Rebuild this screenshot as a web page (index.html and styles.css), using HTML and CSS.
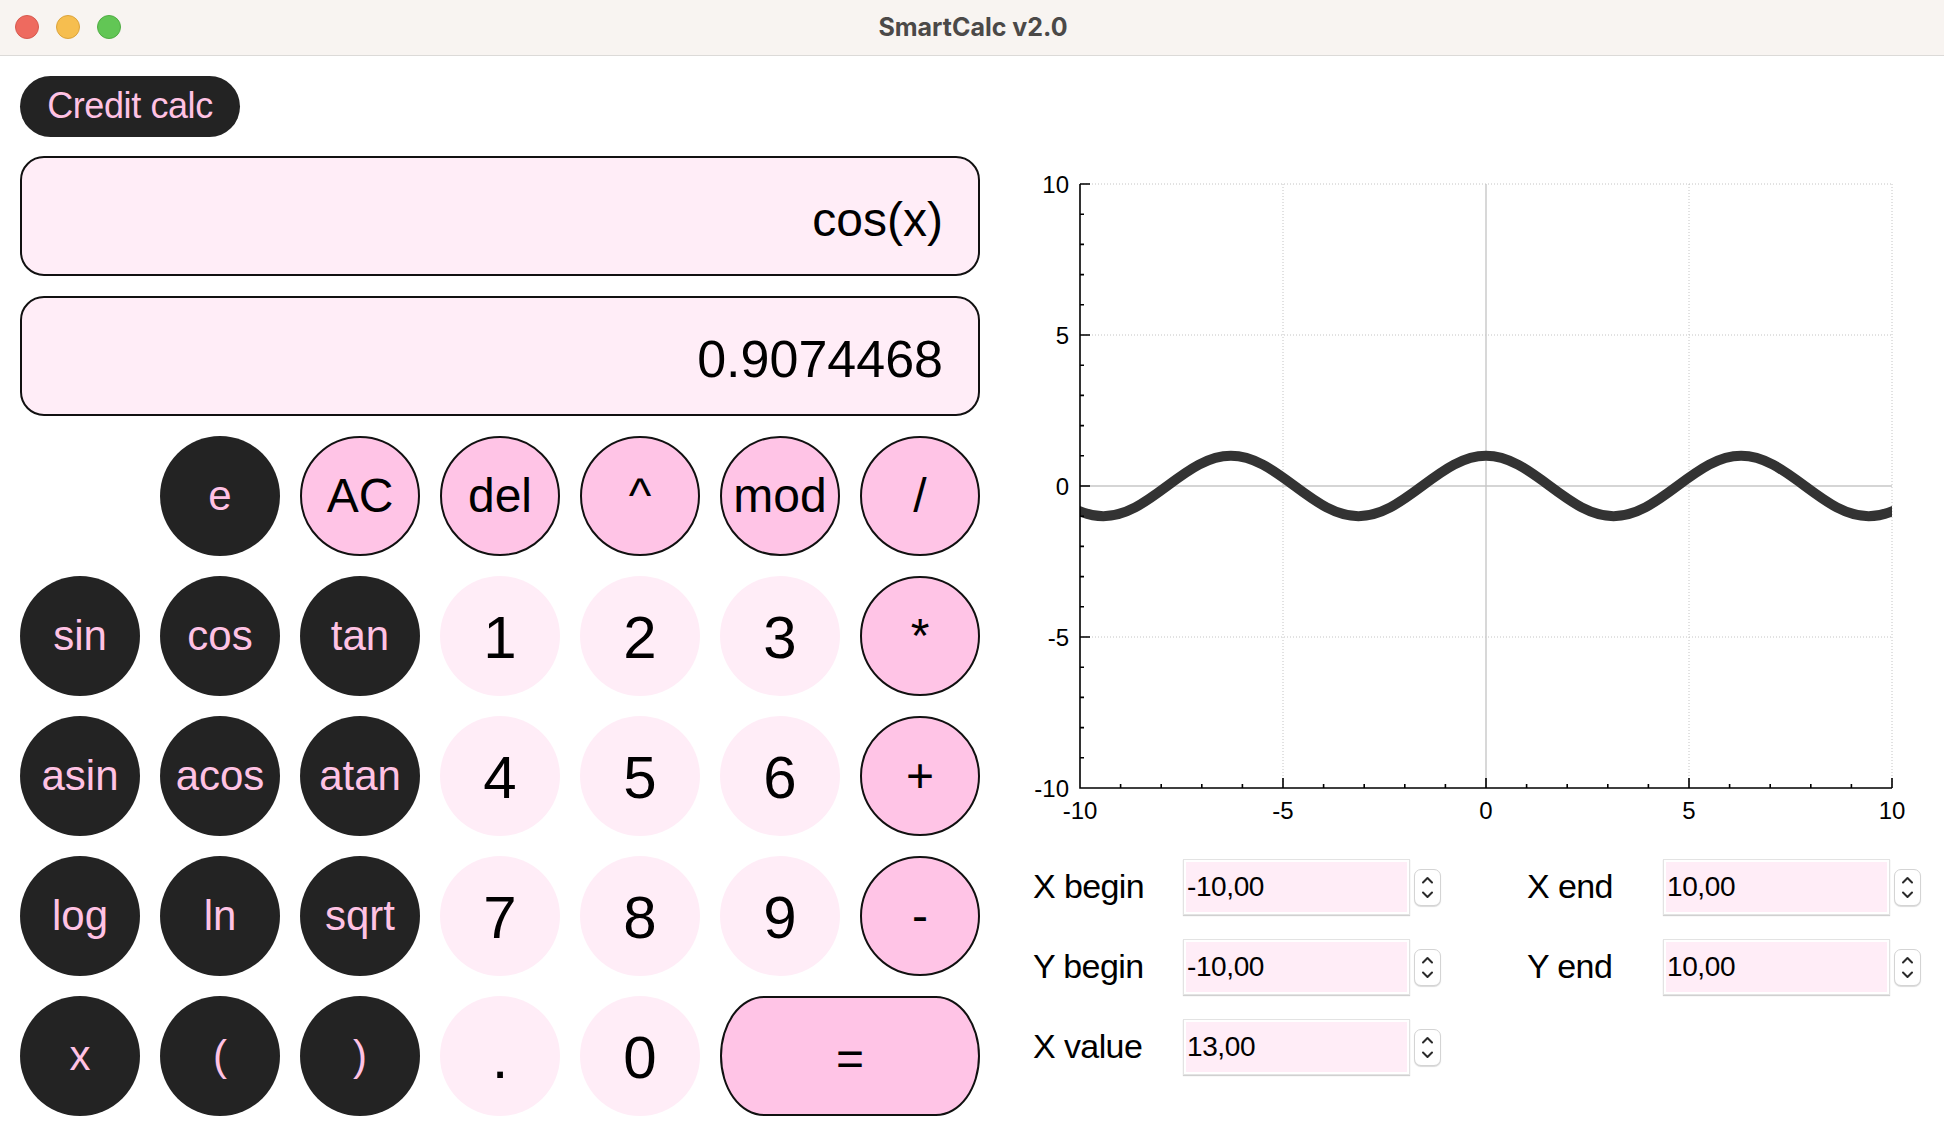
FILE: index.html
```html
<!DOCTYPE html>
<html lang="en">
<head>
<meta charset="utf-8">
<title>SmartCalc v2.0</title>
<link rel="stylesheet" href="styles.css">
</head>
<body>
<div class="window">
  <header class="titlebar">
    <div class="lights">
      <span class="light red"></span>
      <span class="light yellow"></span>
      <span class="light green"></span>
    </div>
    <div class="title">SmartCalc v2.0</div>
    <div class="title-spacer"></div>
  </header>

  <main class="content">
    <section class="calc">
      <button class="credit">Credit calc</button>
      <div class="display expr">cos(x)</div>
      <div class="display result">0.9074468</div>

      <div class="keypad">
        <span class="key-empty"></span>
        <button class="key dark">e</button>
        <button class="key op">AC</button>
        <button class="key op">del</button>
        <button class="key op">^</button>
        <button class="key op">mod</button>
        <button class="key op">/</button>

        <button class="key dark">sin</button>
        <button class="key dark">cos</button>
        <button class="key dark">tan</button>
        <button class="key num">1</button>
        <button class="key num">2</button>
        <button class="key num">3</button>
        <button class="key op">*</button>

        <button class="key dark">asin</button>
        <button class="key dark">acos</button>
        <button class="key dark">atan</button>
        <button class="key num">4</button>
        <button class="key num">5</button>
        <button class="key num">6</button>
        <button class="key op">+</button>

        <button class="key dark">log</button>
        <button class="key dark">ln</button>
        <button class="key dark">sqrt</button>
        <button class="key num">7</button>
        <button class="key num">8</button>
        <button class="key num">9</button>
        <button class="key op">-</button>

        <button class="key dark">x</button>
        <button class="key dark">(</button>
        <button class="key dark">)</button>
        <button class="key num">.</button>
        <button class="key num">0</button>
        <button class="key op equals">=</button>
      </div>
    </section>

    <section class="graph">
      <svg class="plot" width="900" height="670" viewBox="0 0 900 670">
        <defs>
          <clipPath id="plotclip"><rect x="60" y="0" width="812" height="670"/></clipPath>
        </defs>
        <g class="grid-dotted">
          <path d="M263 24V628M669 24V628M872 24V628M60 24H872M60 175H872M60 477H872"/>
        </g>
        <g class="grid-zero">
          <path d="M466 24V628M60 326H872"/>
        </g>
        <path class="curve" clip-path="url(#plotclip)" d="M19.58 326
          C42.00 342.68, 60.93 356.2, 83.35 356.2
          C105.77 356.2, 124.71 342.68, 147.13 326
          C169.55 309.32, 188.48 295.8, 210.90 295.8
          C233.32 295.8, 252.26 309.32, 274.68 326
          C297.10 342.68, 316.03 356.2, 338.45 356.2
          C360.87 356.2, 379.81 342.68, 402.23 326
          C424.65 309.32, 443.58 295.8, 466 295.8
          C488.42 295.8, 507.36 309.32, 529.78 326
          C552.20 342.68, 571.13 356.2, 593.55 356.2
          C615.97 356.2, 634.90 342.68, 657.32 326
          C679.74 309.32, 698.68 295.8, 721.10 295.8
          C743.52 295.8, 762.45 309.32, 784.87 326
          C807.29 342.68, 826.23 356.2, 848.65 356.2
          C871.07 356.2, 890.00 342.68, 912.42 326"/>
        <g class="axis">
          <path d="M60 24V628H872"/>
          <path d="M100.6 628v-4M141.2 628v-4M181.8 628v-4M222.4 628v-4M303.6 628v-4M344.2 628v-4M384.8 628v-4M425.4 628v-4M506.6 628v-4M547.2 628v-4M587.8 628v-4M628.4 628v-4M709.6 628v-4M750.2 628v-4M790.8 628v-4M831.4 628v-4"/>
          <path d="M263 628v-10M466 628v-10M669 628v-10M872 628v-10"/>
          <path d="M60 54.2h4M60 84.4h4M60 114.6h4M60 144.8h4M60 205.2h4M60 235.4h4M60 265.6h4M60 295.8h4M60 356.2h4M60 386.4h4M60 416.6h4M60 446.8h4M60 507.2h4M60 537.4h4M60 567.6h4M60 597.8h4"/>
          <path d="M60 24h10M60 175h10M60 326h10M60 477h10"/>
        </g>
        <g class="ylabels">
          <text x="49" y="32.6">10</text>
          <text x="49" y="183.6">5</text>
          <text x="49" y="334.6">0</text>
          <text x="49" y="485.6">-5</text>
          <text x="49" y="636.6">-10</text>
        </g>
        <g class="xlabels">
          <text x="60" y="659">-10</text>
          <text x="263" y="659">-5</text>
          <text x="466" y="659">0</text>
          <text x="669" y="659">5</text>
          <text x="872" y="659">10</text>
        </g>
      </svg>

      <div class="ranges">
        <label class="rlabel">X begin</label>
        <div class="rbox">-10,00</div>
        <div class="spin"><svg width="25" height="35" viewBox="0 0 25 35"><path d="M8 12.5l4.5-4.5 4.5 4.5M8 22.5l4.5 4.5 4.5-4.5"/></svg></div>
        <label class="rlabel second">X end</label>
        <div class="rbox">10,00</div>
        <div class="spin"><svg width="25" height="35" viewBox="0 0 25 35"><path d="M8 12.5l4.5-4.5 4.5 4.5M8 22.5l4.5 4.5 4.5-4.5"/></svg></div>

        <label class="rlabel">Y begin</label>
        <div class="rbox">-10,00</div>
        <div class="spin"><svg width="25" height="35" viewBox="0 0 25 35"><path d="M8 12.5l4.5-4.5 4.5 4.5M8 22.5l4.5 4.5 4.5-4.5"/></svg></div>
        <label class="rlabel second">Y end</label>
        <div class="rbox">10,00</div>
        <div class="spin"><svg width="25" height="35" viewBox="0 0 25 35"><path d="M8 12.5l4.5-4.5 4.5 4.5M8 22.5l4.5 4.5 4.5-4.5"/></svg></div>

        <label class="rlabel">X value</label>
        <div class="rbox">13,00</div>
        <div class="spin"><svg width="25" height="35" viewBox="0 0 25 35"><path d="M8 12.5l4.5-4.5 4.5 4.5M8 22.5l4.5 4.5 4.5-4.5"/></svg></div>
      </div>
    </section>
  </main>
</div>
</body>
</html>
```

FILE: styles.css
```css
* { box-sizing: border-box; }

html, body {
  margin: 0;
  padding: 0;
  background: #ffffff;
}

body {
  width: 1944px;
  height: 1128px;
  overflow: hidden;
  font-family: "Liberation Sans", Arial, sans-serif;
  color: #000;
}

.window {
  width: 1944px;
  height: 1128px;
  background: #ffffff;
}

/* ---------- title bar ---------- */
.titlebar {
  height: 56px;
  background: #f8f4f1;
  border-bottom: 1px solid #dcdad8;
  display: grid;
  grid-template-columns: 1fr auto 1fr;
  align-items: center;
}

.lights {
  display: flex;
  gap: 17px;
  padding-left: 15px;
  padding-bottom: 1px;
}

.light {
  width: 24px;
  height: 24px;
  border-radius: 50%;
  display: block;
}
.light.red { background: #ee6a5f; border: 1px solid #d65a50; }
.light.yellow { background: #f6be4f; border: 1px solid #dca43c; }
.light.green { background: #62c655; border: 1px solid #50ad44; }

.title {
  font-family: Inter, "Noto Sans", sans-serif;
  font-weight: 700;
  font-size: 25px;
  color: #4b4948;
  padding-bottom: 1px;
  padding-left: 2px;
}

/* ---------- layout ---------- */
.content {
  display: flex;
  gap: 40px;
  padding-left: 20px;
}

.calc {
  width: 960px;
  display: flex;
  flex-direction: column;
}

.credit {
  align-self: flex-start;
  margin-top: 20px;
  width: 220px;
  height: 61px;
  border: none;
  border-radius: 31px;
  background: #232323;
  color: #ffc2e4;
  font-family: "Liberation Sans", Arial, sans-serif;
  font-size: 36px;
  padding: 0 0 2px 0;
  letter-spacing: -0.4px;
}

.display {
  height: 120px;
  border: 2px solid #111;
  border-radius: 24px;
  background: #ffedf7;
  display: flex;
  align-items: center;
  justify-content: flex-end;
  padding: 6px 35px 0 0;
  color: #000;
}

.display.expr {
  margin-top: 19px;
  font-size: 48px;
}

.display.result {
  margin-top: 20px;
  font-size: 52px;
  padding-top: 5px;
}

/* ---------- keypad ---------- */
.keypad {
  margin-top: 20px;
  display: grid;
  grid-template-columns: repeat(7, 120px);
  grid-auto-rows: 120px;
  gap: 20px;
}

.key {
  border: none;
  padding: 0;
  border-radius: 50%;
  font-family: "Liberation Sans", Arial, sans-serif;
  display: flex;
  align-items: center;
  justify-content: center;
  line-height: 1;
}

.key.dark {
  background: #232323;
  color: #ffc2e4;
  font-size: 42px;
}

.key.op {
  background: #ffc4e6;
  border: 2px solid #111;
  color: #000;
  font-size: 48px;
}

.key.num {
  background: #ffedf7;
  color: #000;
  font-size: 60px;
  padding-top: 4px;
}

.key.equals {
  grid-column: span 2;
  border-radius: 44px / 50%;
  padding-top: 6px;
}

/* ---------- graph ---------- */
.graph {
  width: 900px;
  padding-top: 104px;
  display: flex;
  flex-direction: column;
}

.plot {
  display: block;
  font-family: "Liberation Sans", Arial, sans-serif;
  font-size: 24px;
}

.grid-dotted path {
  fill: none;
  stroke: #c4c4c4;
  stroke-width: 1;
  stroke-dasharray: 1 2;
}

.grid-zero path {
  fill: none;
  stroke: #c8c8c8;
  stroke-width: 1.4;
}

.curve {
  fill: none;
  stroke: #333333;
  stroke-width: 10;
  stroke-linejoin: round;
}

.axis path {
  fill: none;
  stroke: #000;
  stroke-width: 1.6;
}

.ylabels text {
  text-anchor: end;
  fill: #000;
}

.xlabels text {
  text-anchor: middle;
  fill: #000;
}

/* ---------- range inputs ---------- */
.ranges {
  margin-top: 29px;
  margin-left: 13px;
  display: grid;
  grid-template-columns: 150px 227px 31px 86px 136px 227px 31px;
  grid-auto-rows: 56px;
  row-gap: 24px;
  align-items: center;
}

.rlabel {
  font-size: 34px;
  color: #000;
  letter-spacing: -0.6px;
  padding-bottom: 2px;
}

.rlabel.second {
  grid-column: 5;
}

.rbox {
  height: 56px;
  border: 1px solid #e3e3e3;
  background: #ffedf7;
  box-shadow: inset 0 0 0 2px #ffffff, 0 1px 1px rgba(0, 0, 0, 0.18);
  display: flex;
  align-items: center;
  padding-left: 3px;
  font-size: 28px;
  letter-spacing: -0.4px;
  color: #000;
}

.spin {
  width: 27px;
  height: 37px;
  margin-left: 4px;
  border: 1px solid #d4d4d4;
  border-radius: 7px;
  background: #ffffff;
  box-shadow: 0 1px 1px rgba(0, 0, 0, 0.15);
}

.spin svg {
  display: block;
}

.spin path {
  fill: none;
  stroke: #2a2a2a;
  stroke-width: 2;
  stroke-linecap: round;
  stroke-linejoin: round;
}
```
